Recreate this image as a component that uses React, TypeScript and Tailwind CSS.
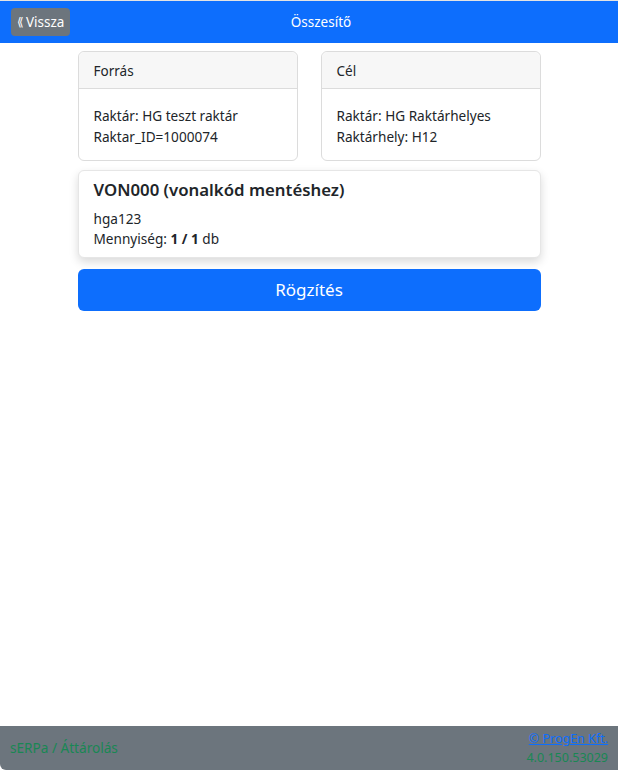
import React from "react";

const Card = ({ title, lines }: { title: string; lines: string[] }) => (
  <div className="flex-1 rounded-md border border-[#dcdcdc] bg-white">
    <div className="h-[37px] rounded-t-md border-b border-[#dcdcdc] bg-[#f7f7f7] px-[15px] pt-[10px] text-[13.5px] leading-[18px] text-[#212529]">
      {title}
    </div>
    <div className="px-[15px] pt-[16px] pb-[13px] text-[13.6px] leading-[21px] text-[#212529]">
      {lines.map((l) => (
        <div key={l}>{l}</div>
      ))}
    </div>
  </div>
);

export default function App() {
  return (
    <div className="flex min-h-[770px] flex-col bg-white font-['Noto_Sans',sans-serif]">
      {/* Header */}
      <div className="border-t border-[#e3e3e3] bg-[#0d6efd]">
        <div className="relative flex h-[42px] items-center justify-center pl-[24px]">
          <button className="absolute left-[11px] top-[7px] flex h-[28px] items-center rounded-[4px] bg-[#6c757d] px-[6px] text-[13.5px] text-white">
            <span className="mr-[2px] text-[12px]">⟪</span>Vissza
          </button>
          <span className="text-[13.5px] text-white">Összesítő</span>
        </div>
      </div>

      {/* Content */}
      <div className="mx-auto flex w-[463px] flex-col pt-[8px]">
        <div className="flex gap-[23px]">
          <Card title="Forrás" lines={["Raktár: HG teszt raktár", "Raktar_ID=1000074"]} />
          <Card title="Cél" lines={["Raktár: HG Raktárhelyes", "Raktárhely: H12"]} />
        </div>

        <div className="mt-[9px] rounded-md border border-[#e6e6e6] bg-white px-[15px] pt-[7px] pb-[8px] shadow-[0_4px_10px_rgba(0,0,0,0.15)]">
          <div className="text-[16.8px] font-[600] leading-[24px] text-[#212529]">
            VON000 (vonalkód mentéshez)
          </div>
          <div className="mt-[7px] text-[13.6px] leading-[20px] text-[#212529]">hga123</div>
          <div className="text-[13.6px] leading-[20px] text-[#212529]">
            Mennyiség: <b>1 / 1</b> db
          </div>
        </div>

        <button className="mt-[11px] h-[42px] w-full rounded-md bg-[#0d6efd] text-[17px] text-white">
          Rögzítés
        </button>
      </div>

      <div className="flex-1" />

      {/* Footer */}
      <div className="flex h-[44px] items-center justify-between rounded-bl-[6px] bg-[#6c757d] px-[10px]">
        <span className="pt-[1px] text-[13.6px] text-[#198754]">sERPa / Áttárolás</span>
        <div className="flex flex-col items-end text-[12.5px] leading-[19px]">
          <a href="#" className="text-[#0d6efd] underline">© ProgEn Kft.</a>
          <span className="text-[#198754]">4.0.150.53029</span>
        </div>
      </div>
    </div>
  );
}
